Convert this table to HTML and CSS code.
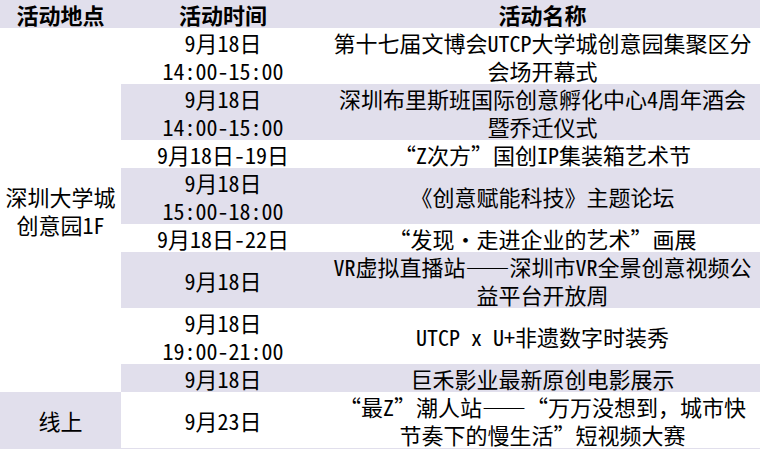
FILE: index.html
```html
<!DOCTYPE html>
<html lang="zh-CN">
<head>
<meta charset="utf-8">
<title>活动安排</title>
<link rel="stylesheet" href="styles.css">
</head>
<body>
<table class="sched">
  <colgroup><col class="c1"><col class="c2"><col class="c3"></colgroup>
  <thead>
    <tr class="head"><th>活动地点</th><th>活动时间</th><th>活动名称</th></tr>
  </thead>
  <tbody>
    <tr><td class="loc" rowspan="8">深圳大学城<br>创意园1F</td><td>9月18日<br>14:00-15:00</td><td>第十七届文博会UTCP大学城创意园集聚区分<br>会场开幕式</td></tr>
    <tr class="alt"><td>9月18日<br>14:00-15:00</td><td>深圳布里斯班国际创意孵化中心4周年酒会<br>暨乔迁仪式</td></tr>
    <tr><td>9月18日-19日</td><td>“Z次方”国创IP集装箱艺术节</td></tr>
    <tr class="alt"><td>9月18日<br>15:00-18:00</td><td>《创意赋能科技》主题论坛</td></tr>
    <tr><td>9月18日-22日</td><td>“发现·走进企业的艺术”画展</td></tr>
    <tr class="alt"><td>9月18日</td><td>VR虚拟直播站——深圳市VR全景创意视频公<br>益平台开放周</td></tr>
    <tr><td>9月18日<br>19:00-21:00</td><td>UTCP x U+非遗数字时装秀</td></tr>
    <tr class="alt"><td>9月18日</td><td>巨禾影业最新原创电影展示</td></tr>
    <tr><td class="loc shade">线上</td><td>9月23日</td><td>“最Z”潮人站——“万万没想到<span class="fw">，</span>城市快<br>节奏下的慢生活”短视频大赛</td></tr>
  </tbody>
</table>
<div class="tail"></div>
</body>
</html>
```

FILE: styles.css
```css
html, body {
  margin: 0;
  padding: 0;
  background: #ffffff;
}

body {
  width: 760px;
  font-family: "Noto Sans CJK SC", "Noto Sans", sans-serif;
  font-size: 22px;
  line-height: 28px;
  color: #000000;
  font-feature-settings: "hwid" 1;
}

.fw {
  font-feature-settings: normal;
}

.sched {
  width: 760px;
  border-collapse: collapse;
  border-spacing: 0;
  table-layout: fixed;
}

.c1 { width: 121px; }
.c2 { width: 204px; }
.c3 { width: 435px; }

.sched th,
.sched td {
  padding: 0;
  text-align: center;
  vertical-align: middle;
  white-space: nowrap;
}

.sched th {
  font-weight: 700;
  background: #e1dfec;
  height: 28px;
}

.sched td {
  font-weight: 400;
}

.sched .alt td {
  background: #e1dfec;
}

.sched td.loc {
  background: #ffffff;
}

.sched td.loc.shade {
  background: #e1dfec;
}

.tail {
  height: 2px;
  background: #e1dfec;
}
```
